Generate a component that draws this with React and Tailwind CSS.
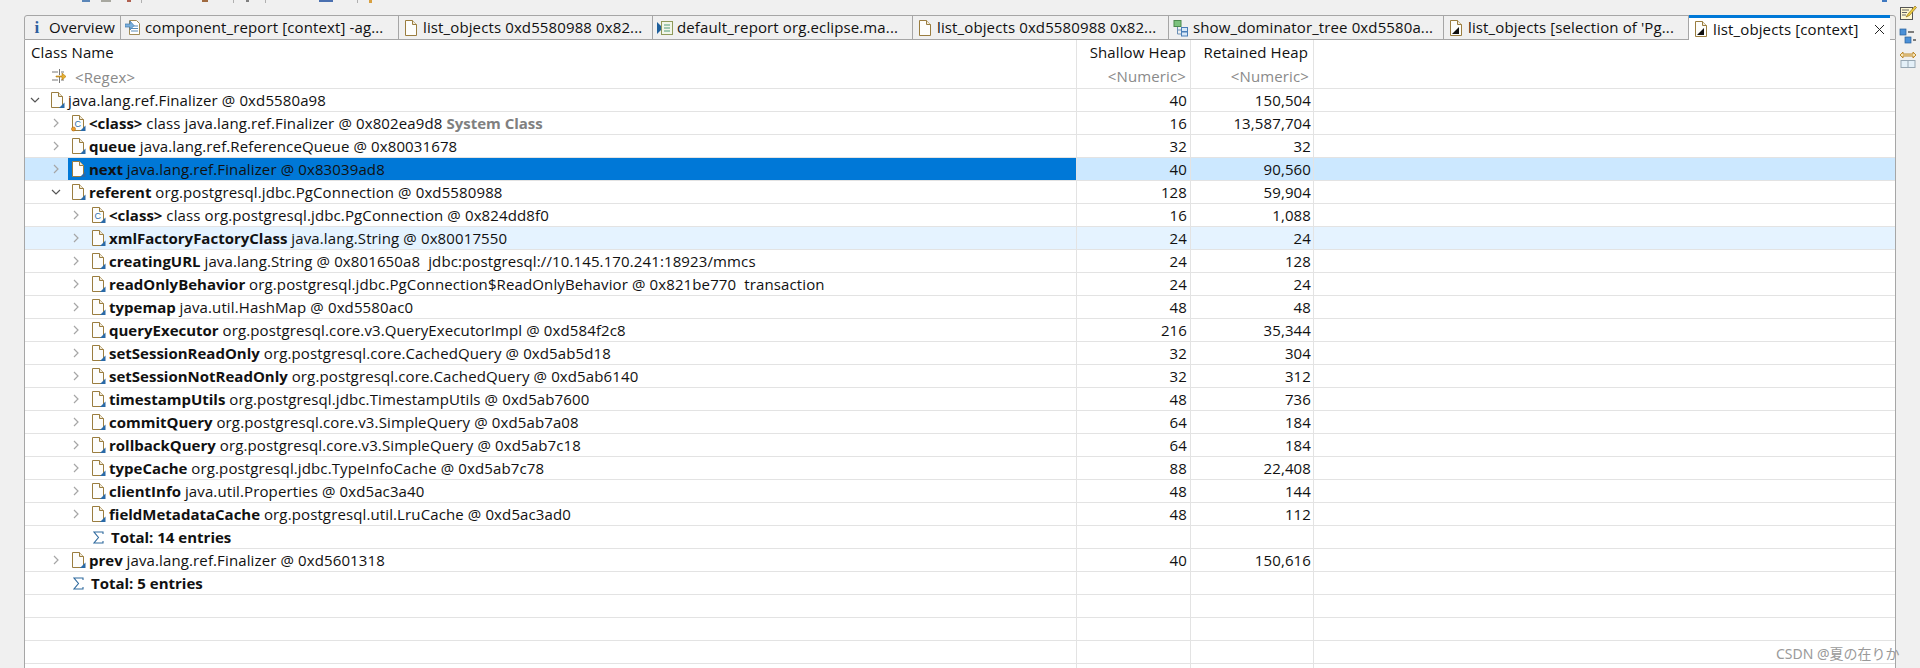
import React from "react";

const font = "font-['Open_Sans','Noto_Sans',sans-serif]";

const rows = [
  { level: 0, open: true, icon: "file", name: "", rest: "java.lang.ref.Finalizer @ 0xd5580a98", shallow: "40", retained: "150,504" },
  { level: 1, icon: "classOrange", name: "<class>", rest: "class java.lang.ref.Finalizer @ 0x802ea9d8", extra: "System Class", shallow: "16", retained: "13,587,704" },
  { level: 1, icon: "file", name: "queue", rest: "java.lang.ref.ReferenceQueue @ 0x80031678", shallow: "32", retained: "32" },
  { level: 1, icon: "file", name: "next", rest: "java.lang.ref.Finalizer @ 0x83039ad8", shallow: "40", retained: "90,560", state: "selected" },
  { level: 1, open: true, icon: "file", name: "referent", rest: "org.postgresql.jdbc.PgConnection @ 0xd5580988", shallow: "128", retained: "59,904" },
  { level: 2, icon: "class", name: "<class>", rest: "class org.postgresql.jdbc.PgConnection @ 0x824dd8f0", shallow: "16", retained: "1,088" },
  { level: 2, icon: "file", name: "xmlFactoryFactoryClass", rest: "java.lang.String @ 0x80017550", shallow: "24", retained: "24", state: "hover" },
  { level: 2, icon: "file", name: "creatingURL", rest: "java.lang.String @ 0x801650a8  jdbc:postgresql://10.145.170.241:18923/mmcs", shallow: "24", retained: "128" },
  { level: 2, icon: "file", name: "readOnlyBehavior", rest: "org.postgresql.jdbc.PgConnection$ReadOnlyBehavior @ 0x821be770  transaction", shallow: "24", retained: "24" },
  { level: 2, icon: "file", name: "typemap", rest: "java.util.HashMap @ 0xd5580ac0", shallow: "48", retained: "48" },
  { level: 2, icon: "file", name: "queryExecutor", rest: "org.postgresql.core.v3.QueryExecutorImpl @ 0xd584f2c8", shallow: "216", retained: "35,344" },
  { level: 2, icon: "file", name: "setSessionReadOnly", rest: "org.postgresql.core.CachedQuery @ 0xd5ab5d18", shallow: "32", retained: "304" },
  { level: 2, icon: "file", name: "setSessionNotReadOnly", rest: "org.postgresql.core.CachedQuery @ 0xd5ab6140", shallow: "32", retained: "312" },
  { level: 2, icon: "file", name: "timestampUtils", rest: "org.postgresql.jdbc.TimestampUtils @ 0xd5ab7600", shallow: "48", retained: "736" },
  { level: 2, icon: "file", name: "commitQuery", rest: "org.postgresql.core.v3.SimpleQuery @ 0xd5ab7a08", shallow: "64", retained: "184" },
  { level: 2, icon: "file", name: "rollbackQuery", rest: "org.postgresql.core.v3.SimpleQuery @ 0xd5ab7c18", shallow: "64", retained: "184" },
  { level: 2, icon: "file", name: "typeCache", rest: "org.postgresql.jdbc.TypeInfoCache @ 0xd5ab7c78", shallow: "88", retained: "22,408" },
  { level: 2, icon: "file", name: "clientInfo", rest: "java.util.Properties @ 0xd5ac3a40", shallow: "48", retained: "144" },
  { level: 2, icon: "file", name: "fieldMetadataCache", rest: "org.postgresql.util.LruCache @ 0xd5ac3ad0", shallow: "48", retained: "112" },
  { level: 2, total: "Total: 14 entries" },
  { level: 1, icon: "file", name: "prev", rest: "java.lang.ref.Finalizer @ 0xd5601318", shallow: "40", retained: "150,616" },
  { level: 1, total: "Total: 5 entries" },
  { empty: true },
  { empty: true },
  { empty: true },
  { empty: true },
];

const tabs = [
  { w: "w-[96px]", icon: "info", text: "Overview" },
  { w: "w-[278px]", icon: "report", text: "component_report [context] -ag..." },
  { w: "w-[254px]", icon: "page", text: "list_objects 0xd5580988 0x82..." },
  { w: "w-[260px]", icon: "default", text: "default_report org.eclipse.ma..." },
  { w: "w-[256px]", icon: "page", text: "list_objects 0xd5580988 0x82..." },
  { w: "w-[275px]", icon: "tree", text: "show_dominator_tree 0xd5580a..." },
  { w: "w-[245px]", icon: "pageBlack", text: "list_objects [selection of 'Pg..." },
];

function TabIcon({ kind }) {
  if (kind === "info")
    return <span className="w-[16px] text-center font-['Liberation_Serif',serif] text-[17px] font-bold leading-none text-[#2f5f9e]">i</span>;
  if (kind === "page" || kind === "pageBlack")
    return (
      <svg width="16" height="18" viewBox="0 0 16 18" className="shrink-0">
        <path d="M2.5 1.5h7l4 4v11h-11z" fill="#fdfdfb" stroke="#9a7d3f" />
        <path d="M9.5 1.5v4h4" fill="#f0ead8" stroke="#9a7d3f" />
        {kind === "pageBlack" && <path d="M4 15l7-7v7z" fill="#111" />}
      </svg>
    );
  if (kind === "report")
    return (
      <svg width="16" height="18" viewBox="0 0 16 18" className="shrink-0">
        <path d="M4.5 1.5h7l3 3v11h-10z" fill="#fff" stroke="#a08a55" />
        <path d="M6 7h7M6 9.5h7M6 12h7" stroke="#5b8db8" />
        <path d="M0 5h5V2l4 4.5-4 4.5V8H0z" fill="#7ab0dc" stroke="#3f78ad" strokeWidth=".7" />
      </svg>
    );
  if (kind === "default")
    return (
      <svg width="16" height="18" viewBox="0 0 16 18" className="shrink-0">
        <path d="M0 3l6 6-6 6z" fill="#1e5f9c" />
        <rect x="4.5" y="2.5" width="11" height="13" fill="#f1f6e8" stroke="#8f9a5a" />
        <path d="M7 6h6M7 9h6M7 12h6" stroke="#4f9a78" />
      </svg>
    );
  return (
    <svg width="16" height="18" viewBox="0 0 16 18" className="shrink-0">
      <rect x="1" y="1.5" width="7" height="6" fill="#7cc27c" stroke="#4d8a4d" />
      <path d="M4.5 8v7h4M4.5 11h4" stroke="#6a8fb5" fill="none" />
      <rect x="8.5" y="8.5" width="6" height="4" fill="#d8e8f8" stroke="#4a7fb8" />
      <rect x="8.5" y="13" width="6" height="4" fill="#d8e8f8" stroke="#4a7fb8" />
    </svg>
  );
}

function RowIcon({ kind }) {
  return (
    <svg width="15" height="17" viewBox="0 0 15 17" className="shrink-0">
      <path d="M1.5 .5h7l4 4v11h-11z" fill="#fdfdfb" stroke="#9a7d3f" />
      <path d="M8.5 .5v4h4" fill="#efe8d6" stroke="#9a7d3f" />
      {kind !== "file" && (
        <text x="3.5" y="11.5" fontSize="9" fontFamily="Liberation Sans, sans-serif" fill="#2f6fb0">
          C
        </text>
      )}
      {kind === "classOrange" && <circle cx="2.5" cy="14" r="2" fill="#f0a030" stroke="#b06a10" strokeWidth=".6" />}
      <path d="M9 16l5.5-5.5V16z" fill="#2a6aa8" />
    </svg>
  );
}

function Chevron({ open }) {
  if (open)
    return (
      <svg width="10" height="10" viewBox="0 0 10 10" className="shrink-0">
        <path d="M1 3l4 4 4-4" fill="none" stroke="#555" strokeWidth="1.2" />
      </svg>
    );
  return (
    <svg width="10" height="10" viewBox="0 0 10 10" className="shrink-0">
      <path d="M3 1l4 4-4 4" fill="none" stroke="#a6a6a6" strokeWidth="1.2" />
    </svg>
  );
}

function Sigma() {
  return (
    <svg width="11" height="13" viewBox="0 0 11 13" className="shrink-0">
      <path d="M10 3V1H1l4.5 5.5L1 12h9v-2" fill="none" stroke="#2f6a9e" strokeWidth="1.1" />
    </svg>
  );
}

function TreeRow({ row }) {
  const selected = row.state === "selected";
  const bg = selected ? "bg-[#cce8ff]" : row.state === "hover" ? "bg-[#e5f3ff]" : "bg-white";
  const pad = row.level === 0 ? "pl-[5px]" : row.level === 1 ? "pl-[26px]" : "pl-[46px]";

  return (
    <div className={`grid h-[23px] grid-cols-[1052px_114px_123px_1fr] border-b border-[#e3e3e3] ${bg}`}>
      <div className={`flex items-center overflow-hidden border-r border-[#e3e3e3] whitespace-pre ${pad}`}>
        {!row.empty && !row.total && (
          <>
            <Chevron open={row.open} />
            <div className={`ml-[7px] flex h-full flex-1 items-center pl-[3px] ${selected ? "bg-[#0078d7]" : ""}`}>
              <RowIcon kind={row.icon} />
              <span className="ml-[3px]">
                {row.name && <b className="font-bold tracking-normal">{row.name} </b>}
                {row.rest}
                {row.extra && <b className="ml-[4px] font-bold tracking-normal text-[#808080]">{row.extra}</b>}
              </span>
            </div>
          </>
        )}
        {row.total && (
          <div className="ml-[22px] flex items-center gap-[7px]">
            <Sigma />
            <b className="font-bold tracking-normal">{row.total}</b>
          </div>
        )}
      </div>
      <div className="border-r border-[#e3e3e3] pr-[3px] text-right leading-[22px]">{row.shallow}</div>
      <div className="border-r border-[#e3e3e3] pr-[2px] text-right leading-[22px]">{row.retained}</div>
      <div />
    </div>
  );
}

export default function App() {
  return (
    <div className={`flex h-[668px] w-[1920px] overflow-hidden bg-[#f0f0f0] text-[15px] tracking-[0.12px] text-[#111] ${font}`}>
      <div className="w-[24px] shrink-0" />

      <div className="flex w-[1872px] shrink-0 flex-col">
        {/* cut off toolbar icons */}
        <div className="flex h-[15px] shrink-0 items-start pl-[58px]">
          <div className="h-[2px] w-[8px] bg-[#5b86b8]" />
          <div className="ml-[11px] h-[2px] w-[10px] bg-[#a8a8a0]" />
          <div className="ml-[16px] h-[2px] w-[4px] bg-[#b06050]" />
          <div className="ml-[10px] h-[3px] w-px bg-[#b0b0b0]" />
          <div className="ml-[60px] h-[2px] w-[6px] bg-[#a06a40]" />
          <div className="ml-[25px] h-[3px] w-px bg-[#b0b0b0]" />
          <div className="ml-[12px] h-[2px] w-[3px] bg-[#808080]" />
          <div className="ml-[16px] h-[3px] w-px bg-[#b0b0b0]" />
          <div className="ml-[53px] h-[2px] w-[14px] bg-[#4a70b0]" />
          <div className="ml-[24px] h-[3px] w-px bg-[#b0b0b0]" />
          <div className="ml-[11px] h-[3px] w-[3px] bg-[#d8a040]" />
          <div className="ml-[1510px] h-[2px] w-[5px] bg-[#3f78c0]" />
        </div>

        <div className="flex h-[25px] shrink-0 rounded-tl-[3px] rounded-tr-[3px] border-x border-t border-b border-[#a6a6a6]">
          {tabs.map((t, i) => (
            <div key={i} className={`flex shrink-0 items-center gap-[4px] overflow-hidden border-r border-[#a6a6a6] pl-[4px] whitespace-pre ${t.w}`}>
              <TabIcon kind={t.icon} />
              <span>{t.text}</span>
            </div>
          ))}
          <div className="z-10 -mt-px -mb-px flex h-[25px] w-[201px] shrink-0 items-center gap-[4px] border-t-[3px] border-[#0078d7] bg-white pl-[4px]">
            <TabIcon kind="pageBlack" />
            <span>list_objects [context]</span>
            <svg width="11" height="11" viewBox="0 0 11 11" className="mr-[5px] ml-auto shrink-0">
              <path d="M1 1l9 9M10 1l-9 9" stroke="#222" strokeWidth="1" />
            </svg>
          </div>
        </div>

        <div className="min-h-0 flex-1 overflow-hidden border-x border-[#a6a6a6] bg-white">
          <div className="grid h-[25px] grid-cols-[1052px_114px_123px_1fr] leading-[25px]">
            <div className="border-r border-[#e3e3e3] pl-[6px]">Class Name</div>
            <div className="border-r border-[#e3e3e3] pr-[4px] text-right">Shallow Heap</div>
            <div className="border-r border-[#e3e3e3] pr-[5px] text-right">Retained Heap</div>
            <div />
          </div>
          <div className="grid h-[24px] grid-cols-[1052px_114px_123px_1fr] border-b border-[#e3e3e3] leading-[22px] text-[#8a8a8a]">
            <div className="flex items-center gap-[8px] border-r border-[#e3e3e3] pl-[27px]">
              <svg width="15" height="15" viewBox="0 0 15 15" className="shrink-0">
                <path d="M0 3h6M9 3h3M0 11h6M9 11h3M7.5 0v6M7.5 8v6" stroke="#777" />
                <path d="M4 7h6V4l4 3.5-4 3.5V8H4z" fill="#e8b030" stroke="#b07a10" strokeWidth=".6" />
              </svg>
              <span>&lt;Regex&gt;</span>
            </div>
            <div className="border-r border-[#e3e3e3] pr-[4px] text-right">&lt;Numeric&gt;</div>
            <div className="border-r border-[#e3e3e3] pr-[4px] text-right">&lt;Numeric&gt;</div>
            <div />
          </div>
          {rows.map((row, i) => (
            <TreeRow key={i} row={row} />
          ))}
        </div>
      </div>

      <div className="flex w-[24px] shrink-0 flex-col items-center gap-[7px] pt-[5px]">
        <svg width="18" height="16" viewBox="0 0 18 16">
          <rect x="1.5" y="2.5" width="12" height="12" fill="#fff8d0" stroke="#555" />
          <path d="M3 5h7M3 7.5h5M3 10h4" stroke="#666" />
          <path d="M7 12l2-3 7-8 1.5 1.5-7 8z" fill="#f0d040" stroke="#806010" strokeWidth=".6" />
        </svg>
        <svg width="18" height="16" viewBox="0 0 18 16">
          <rect x="1" y="1" width="6" height="6" fill="#4a90d8" stroke="#2a6098" strokeWidth=".7" />
          <rect x="6" y="9" width="6" height="6" fill="#4a90d8" stroke="#2a6098" strokeWidth=".7" />
          <path d="M9 4h6M14 12h3" stroke="#555" strokeWidth="1.4" />
        </svg>
        <svg width="18" height="18" viewBox="0 0 18 18">
          <path d="M1 4l3-3v2h10V1l3 3-3 3V5H4v2z" fill="#f4e4b8" stroke="#b8801c" strokeWidth=".9" />
          <rect x="2" y="9.5" width="14" height="7" fill="#e4f0f8" stroke="#98a8b4" />
          <path d="M9 9.5v7" stroke="#98a8b4" />
        </svg>
      </div>

      <div className="absolute top-[643px] left-[1776px] font-['Noto_Sans','Noto_Sans_CJK_JP',sans-serif] text-[14px] tracking-normal whitespace-pre text-[#9a9a9a]">
        CSDN @夏の在りか
      </div>
    </div>
  );
}
